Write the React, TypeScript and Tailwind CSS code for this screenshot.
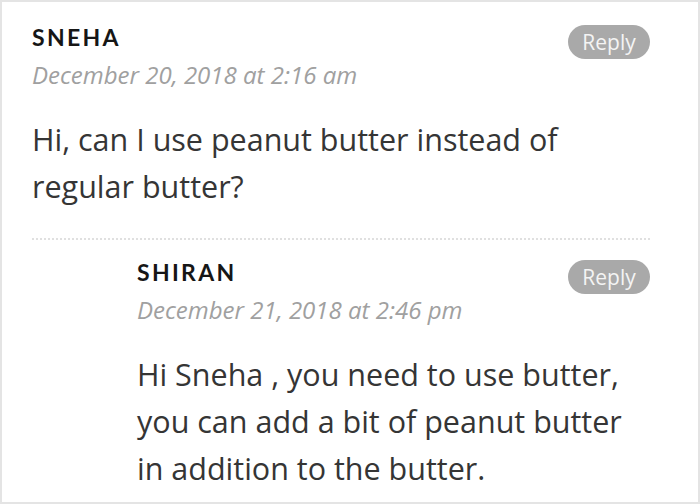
const nameFont = { fontFamily: "Lato, 'Open Sans', sans-serif" };

type CommentProps = {
  author: string;
  date: string;
  lines: string[];
};

const Comment = ({ author, date, lines }: CommentProps) => {
  return (
    <div>
      <div className="flex items-start justify-between">
        <div className="flex flex-col">
          <span
            className="text-[23px] leading-[28px] font-bold tracking-[0.1em] text-[#161616]"
            style={nameFont}
          >
            {author}
          </span>
          <span className="mt-[10px] text-[24px] leading-[28px] italic text-[#a0a0a0]">
            {date}
          </span>
        </div>
        <button className="mt-[2px] h-[34px] w-[82px] rounded-full bg-[#a9a9a9] text-[21px] leading-none text-[#f4f4f4]">
          Reply
        </button>
      </div>
      <p className="mt-[27px] text-[30.5px] leading-[47px] text-[#353535]">
        {lines.map((l, i) => (
          <span key={i} className="block whitespace-nowrap">
            {l}
          </span>
        ))}
      </p>
    </div>
  );
};

export default function App() {
  return (
    <div
      className="w-[700px] h-[504px] overflow-hidden bg-white border-2 border-[#e4e4e4] pl-[30px] pr-[48px] pt-[21px]"
      style={{ fontFamily: "'Open Sans', 'Noto Sans', sans-serif" }}
    >
      <Comment
        author="SNEHA"
        date="December 20, 2018 at 2:16 am"
        lines={['Hi, can I use peanut butter instead of', 'regular butter?']}
      />
      <div className="mt-[28px] border-t-2 border-dotted border-[#e0e0e0]" />
      <div className="pl-[105px] pt-[18px]">
        <Comment
          author="SHIRAN"
          date="December 21, 2018 at 2:46 pm"
          lines={[
            'Hi Sneha , you need to use butter,',
            'you can add a bit of peanut butter',
            'in addition to the butter.',
          ]}
        />
      </div>
    </div>
  );
}
